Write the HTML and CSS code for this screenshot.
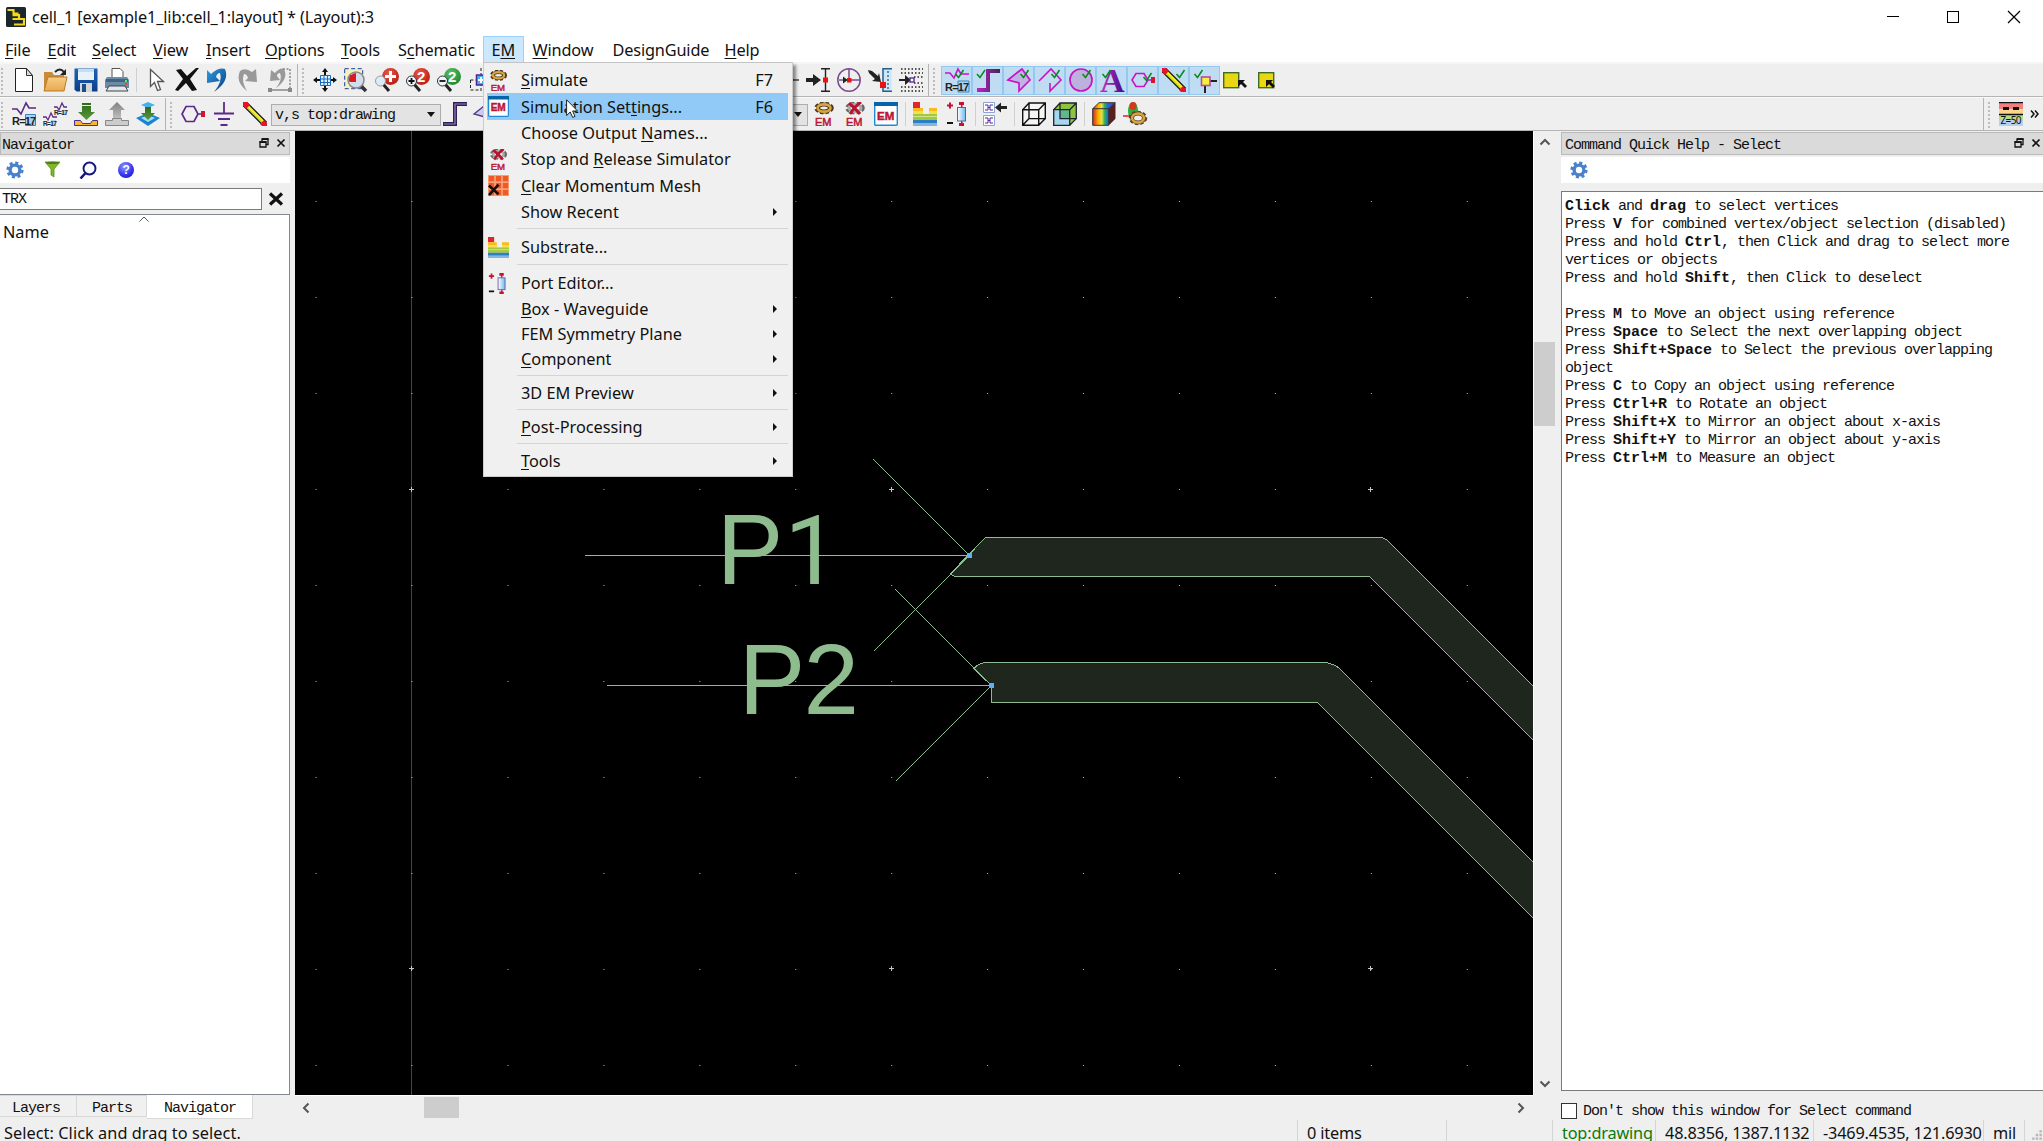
FILE: index.html
```html
<!DOCTYPE html>
<html lang="en">
<head>
<meta charset="utf-8">
<title>cell_1 [example1_lib:cell_1:layout] * (Layout):3</title>
<link rel="stylesheet" href="styles.css">
</head>
<body>
<svg class="defs" width="0" height="0">
  <defs>
    <linearGradient id="rainbow" x1="0" x2="1" y1="0" y2="0"><stop offset="0" stop-color="#e02020"/><stop offset=".25" stop-color="#f7b500"/><stop offset=".4" stop-color="#e8e04a"/><stop offset=".52" stop-color="#3cb44b"/><stop offset=".65" stop-color="#1e6fd9"/><stop offset="1" stop-color="#4338ca"/></linearGradient>
    <linearGradient id="purple" x1="0" x2="1" y1="0" y2="0"><stop offset="0" stop-color="#c31fc8"/><stop offset="1" stop-color="#3a2a55"/></linearGradient>
    <linearGradient id="letter" x1="0" x2="1" y1="0" y2="0"><stop offset="0" stop-color="#d030c0"/><stop offset="1" stop-color="#3a0b8a"/></linearGradient>
    <linearGradient id="blue" x1="0" x2="0" y1="0" y2="1"><stop offset="0" stop-color="#1d63b8"/><stop offset="1" stop-color="#0b3f86"/></linearGradient>
    <linearGradient id="tan" x1="0" x2="0" y1="0" y2="1"><stop offset="0" stop-color="#f7cd86"/><stop offset="1" stop-color="#e9a84f"/></linearGradient>
    <linearGradient id="grn" x1="0" x2="0" y1="0" y2="1"><stop offset="0" stop-color="#2d6a1b"/><stop offset="1" stop-color="#5b9a3c"/></linearGradient>
    <linearGradient id="gry" x1="0" x2="0" y1="0" y2="1"><stop offset="0" stop-color="#808080"/><stop offset="1" stop-color="#bdbdbd"/></linearGradient>
    <linearGradient id="arrowblue" x1="0" x2="1" y1="0" y2="1"><stop offset="0" stop-color="#2c9be0"/><stop offset="1" stop-color="#0b3c84"/></linearGradient>
    <radialGradient id="ball" cx=".4" cy=".3" r=".8"><stop offset="0" stop-color="#8f9bff"/><stop offset=".6" stop-color="#3a3af0"/><stop offset="1" stop-color="#1616c8"/></radialGradient>
    <radialGradient id="red" cx=".4" cy=".3" r=".8"><stop offset="0" stop-color="#e8574a"/><stop offset="1" stop-color="#b3160d"/></radialGradient>
    <radialGradient id="green" cx=".4" cy=".3" r=".8"><stop offset="0" stop-color="#5cc063"/><stop offset="1" stop-color="#17812a"/></radialGradient>
    <linearGradient id="cyl" x1="0" x2="1" y1="0" y2="0"><stop offset="0" stop-color="#fff"/><stop offset="1" stop-color="#6db9ee"/></linearGradient>
    <symbol id="check" viewBox="0 0 10 10"><path d="M1 5l3 3.500L9 1" fill="none" stroke="#078a1c" stroke-width="1.500"/></symbol>
    <symbol id="gear" viewBox="0 0 24 24"><circle cx="12" cy="12" r="9.500" fill="none" stroke="currentColor" stroke-width="4" stroke-dasharray="4 3.460"/><circle cx="12" cy="12" r="6.500" fill="none" stroke="currentColor" stroke-width="4.500"/></symbol>
    <symbol id="em-run" viewBox="0 0 24 24"><ellipse cx="12" cy="6" rx="8" ry="4.500" fill="none" stroke="#4b3a1a" stroke-width="3.600" stroke-dasharray="3.200 2"/><ellipse cx="12" cy="6" rx="6" ry="3.500" fill="none" stroke="#4b3a1a" stroke-width="4"/><ellipse cx="12" cy="6" rx="6.500" ry="3.600" fill="none" stroke="#d9a441" stroke-width="2.600"/><text x="3" y="23.500" class="em">EM</text></symbol>
    <symbol id="em-stop" viewBox="0 0 24 24"><ellipse cx="12" cy="6" rx="8" ry="4.500" fill="none" stroke="#666" stroke-width="3.600" stroke-dasharray="3.200 2"/><ellipse cx="12" cy="6" rx="6" ry="3.600" fill="none" stroke="#a9a9a9" stroke-width="3"/><path d="M6 1Q12 6 17 12M18 0Q12 4 7 12" stroke="#b8132d" stroke-width="3" fill="none"/><text x="3" y="23.500" class="em">EM</text></symbol>
    <symbol id="em-set" viewBox="0 0 24 24"><rect x=".7" y=".7" width="22.600" height="22.600" rx="1" fill="#fff" stroke="#1f8bd8" stroke-width="1.400"/><path d="M0 0h24v4H0z" fill="#0864a8"/><text x="3" y="17.500" class="em emb">EM</text></symbol>
    <symbol id="substrate" viewBox="0 0 24 24"><path d="M0 0h7v6H0z" fill="#e0262b"/><path d="M0 6h10v6h6V6h8v6H0z" fill="#fbb91e"/><path d="M0 9h10v3h6V9h8v6H0z" fill="#f6df4d"/><path d="M0 12h24v6H0z" fill="#a3c93c"/><path d="M0 14h24v1H0z" fill="#d3e58b"/><path d="M0 18h24v6H0z" fill="#2c7fc2"/><path d="M0 21h24v3H0z" fill="#86b6e0"/></symbol>
    <symbol id="port" viewBox="0 0 24 24"><path d="M1 3.500h6M4 .5v6" stroke="#c4122f" stroke-width="2"/><path d="M1 21h6" stroke="#111" stroke-width="2"/><path d="M13 0h5v3h-5zM13 21h5v3h-5zM15 3h1.500v18H15z" fill="#c4122f"/><rect x="11.500" y="5.500" width="8" height="13.500" fill="url(#cyl)" stroke="#6e57a8"/></symbol>
    <symbol id="pencil" viewBox="0 0 24 24"><path d="M2 2l20 20" stroke="#111" stroke-width="6"/><path d="M3 3l18 18" stroke="#f6ef28" stroke-width="3.500"/><path d="M3 4.500l16 16" stroke="#8abf2c" stroke-width="1"/><path d="M0 0h4l3 3-4 4-3-3zM24 24h-5l-2-2 4-4 3 3z" fill="#e5142a"/></symbol>
    <symbol id="resize" viewBox="0 0 10 10"><path d="M3 3V1h6v5.500H7M1 4h6v5H1z" fill="none" stroke="#111" stroke-width="1.300"/><path d="M.5 4.200h7M3 1.200h6.500" stroke="#111" stroke-width="1.800"/></symbol>
    <symbol id="close" viewBox="0 0 10 10"><path d="M1.500 1.500l7 7M8.500 1.500l-7 7" stroke="#111" stroke-width="1.700"/></symbol>
  </defs>
</svg>

<header class="titlebar">
  <svg class="logo" viewBox="0 0 20 20"><rect width="20" height="20" rx="1.500" fill="#1b262b"/><path d="M1.500 3h6v3.500h5M6.500 8.200h6.500v3M6.500 12H18v5.500H8" fill="none" stroke="#f3d71a" stroke-width="2.200"/></svg>
  <span class="ui title-text">cell_1 [example1_lib:cell_1:layout] * (Layout):3</span>
  <svg class="winctl" viewBox="0 0 134 14"><path d="M0 6.500h12" stroke="#000"/><rect x="60.500" y="1.500" width="11" height="11" fill="none" stroke="#000"/><path d="M121 1l12 12M133 1l-12 12" stroke="#000" stroke-width="1.200"/></svg>
</header>

<nav class="menubar ui">
  <span><u>F</u>ile</span><span><u>E</u>dit</span><span><u>S</u>elect</span><span><u>V</u>iew</span><span><u>I</u>nsert</span><span><u>O</u>ptions</span><span><u>T</u>ools</span><span>S<u>c</u>hematic</span><span class="open">E<u>M</u></span><span><u>W</u>indow</span><span>DesignGuide</span><span><u>H</u>elp</span>
</nav>

<div class="bar bar1">
  <div class="group g1">
    <svg viewBox="0 0 24 24"><path d="M3.500.500h11l6 7v16h-17z" fill="#fff" stroke="#222"/><path d="M14.500.500v7h6z" fill="#ddd" stroke="#333"/></svg>
    <svg viewBox="0 0 24 24"><path d="M1 23V4h8l2 3h10v16z" fill="#c98b3a"/><path d="M1 23L5 9h19l-3 14z" fill="url(#tan)" stroke="#b97a2c"/><path d="M12 4q5-5 9 0" fill="none" stroke="#222" stroke-width="2"/><path d="M23 1v6h-6z" fill="#222"/></svg>
    <svg viewBox="0 0 24 24"><path d="M.500.500h23v23h-21l-2-2z" fill="url(#blue)"/><path d="M4 1h16v11H4z" fill="#e8f2fa"/><path d="M4 1h16v3H4z" fill="#c5def0"/><path d="M6 15h12v9H6z" fill="#d5d5d8"/><path d="M8 16h4v8H8z" fill="#1d4b8d"/></svg>
    <svg viewBox="0 0 24 24"><path d="M7 10V.500h8l3 3V10" fill="#fff" stroke="#555"/><path d="M2 9h20l2 3v8H0v-8z" fill="#6a8ca6"/><path d="M1 11h22v3H1z" fill="#3f6380"/><path d="M4 18h16l3 5H1z" fill="#dce8f0" stroke="#444"/><path d="M20 12h2v2h-2z" fill="#4f5"/><path d="M20 15h2v2h-2z" fill="#e44"/></svg>
    <i class="sep"></i>
    <svg viewBox="0 0 24 24"><path d="M6.500 1.500v17l4-4 3 8 3-1-3-8h6z" fill="#fff" stroke="#555" stroke-width="1.300"/></svg>
    <svg viewBox="0 0 24 24"><path d="M1 2l5-1 6 7 9-8h3l-9 11 7 11-5 1-6-8-8 8-3-1 8-11z" fill="#111"/></svg>
    <svg viewBox="0 0 24 24"><path d="M1 2l4 4Q13-1 19 1q5 12-11 23 9-11 6-19-3 0-4 4l4 4-13 2z" fill="url(#arrowblue)"/></svg>
    <svg viewBox="0 0 24 24"><path d="M19 1l-4 3Q8-1 3 3q-5 11 7 20-6-10-3-17 3 0 4 4l-3 3 12 1z" fill="#999"/></svg>
    <svg viewBox="0 0 24 24"><path d="M3 2l4 3Q12-1 16 1q5 10-8 19 7-9 4-15-3 0-3 3l3 4-10 1z" fill="#999"/><path d="M15 1h7M22 1v20" stroke="#888" stroke-dasharray="2 1.500" fill="none" stroke-width="1.500"/><path d="M2 22h20" stroke="#888" stroke-width="1.500"/><path d="M0 20h4v4H0zM20 20h4v4h-4z" fill="#888"/></svg>
  </div>
  <div class="group g2">
    <svg viewBox="0 0 24 24"><path d="M12 0l3 4h-2v3h-2V4H9zM12 24l-3-4h2v-3h2v3h2zM0 12l4-3v2h3v2H4v2zM24 12l-4-3v2h-3v2h3v2z" fill="#111"/><path d="M7.500 7.500h10v10h-10zM11 7v11M14.500 7v11M7 11h11M7 14.500h11" fill="#dff0ff" stroke="#1769c0"/></svg>
    <svg viewBox="0 0 24 24"><rect x=".7" y=".7" width="18" height="20" fill="#f2f2bc" stroke="#223a99" stroke-dasharray="4 2.500"/><path d="M17 18l5 5" stroke="#333" stroke-width="3.500"/><circle cx="12" cy="12" r="8" fill="#d5dcec" stroke="#888" stroke-width="1.500"/><path d="M6 7h6v7H5.500q-1-4 .5-7z" fill="#dd1923"/><path d="M12 5v8H5a7.500 7.500 0 017-8z" fill="#dd1923"/></svg>
    <svg viewBox="0 0 24 24"><circle cx="15.500" cy="8.500" r="8.500" fill="url(#red)"/><path d="M10 8.500h11M15.500 3v11" stroke="#fff" stroke-width="3"/><path d="M8 16l6 7" stroke="#222" stroke-width="3"/><circle cx="5.500" cy="13" r="5" fill="#d8edf8" stroke="#999"/></svg>
    <svg viewBox="0 0 24 24"><circle cx="15.500" cy="8.500" r="8.500" fill="url(#red)"/><text x="11" y="14" class="num">2</text><path d="M8 16l6 7" stroke="#222" stroke-width="3"/><circle cx="5.500" cy="13" r="5" fill="#eef5fa" stroke="#333"/><path d="M2.500 13h6M5.500 10v6" stroke="#111" stroke-width="1.800"/></svg>
    <svg viewBox="0 0 24 24"><circle cx="15.500" cy="8.500" r="8.500" fill="url(#green)"/><text x="11" y="14" class="num">2</text><path d="M8 16l6 7" stroke="#222" stroke-width="3"/><circle cx="5.500" cy="13" r="5" fill="#eef5fa" stroke="#333"/><path d="M2.500 13h6" stroke="#111" stroke-width="1.800"/></svg>
    <svg viewBox="0 0 24 24"><path d="M2.500 12v10h10M2.500 12h6M13 0v24" fill="none" stroke="#222" stroke-dasharray="3 2"/><rect x="8.500" y="7" width="12" height="10" fill="#39b6ee" stroke="#52259b" stroke-width="1.500"/><path d="M10 12h9M13 9v6" stroke="#fff" stroke-width="2"/></svg>
    <i class="gap-a"></i>
    <svg viewBox="0 0 24 24"><path d="M0 12h24" stroke="#222" stroke-width="1.300"/></svg>
    <svg viewBox="0 0 24 24"><path d="M0 10h7V6l8 6-8 6v-4H0z" fill="#222"/><path d="M15 .700h9M15 23.300h9M19.500 1v22" stroke="#222" stroke-width="1.400"/><rect x="17" y="9.500" width="5" height="5" fill="#e11"/></svg>
    <svg viewBox="0 0 24 24"><circle cx="12" cy="12" r="11.200" fill="none" stroke="#7a4a92" stroke-width="1.500"/><path d="M12 1v11h11" fill="none" stroke="#7a4a92" stroke-width="1.500"/><path d="M2 12h7M6 9l4 3-4 3" fill="#222" stroke="#222"/><rect x="10" y="10" width="4.500" height="4.500" fill="#e11"/></svg>
    <svg viewBox="0 0 24 24"><path d="M0 2l4 1 6 5 1-3 2 9-9-1 3-2L1 5z" fill="#222"/><path d="M15 1h8.500v22H15z" fill="#c8e8fb"/><path d="M24 .700h-9v22.600h9" fill="none" stroke="#245c8c" stroke-width="1.500"/><path d="M20 3v18" stroke="#222" stroke-dasharray="2 2"/><path d="M12 14h6v6h-6z" fill="#e11"/></svg>
    <svg viewBox="0 0 24 24"><path d="M2 1h22M2 5h22M2 19h22M2 23h22M15 9h9M15 15h9" stroke="#222" stroke-width="1.500" stroke-dasharray="1.500 2"/><path d="M0 11h6V7l6 5-6 5v-4H0z" fill="#222"/><rect x="11" y="10" width="4" height="4" fill="#fff" stroke="#5a2a9a" stroke-width="1.400"/></svg>
  </div>
  <div class="group g3">
    <b class="on"><svg viewBox="0 0 24 24"><path d="M0 5h5l4 5 4-9 3 5h8" fill="none" stroke="#c715c5" stroke-width="1.600"/><use href="#check" x="9" y="1" width="11" height="10"/><path d="M13 13h11v11H13z" fill="#a9d4f5" stroke="#3c82b8"/><text x="0" y="22.500" class="rn">R=17</text></svg></b>
    <b class="on"><svg viewBox="0 0 24 24"><path d="M1 22h11V3h12" fill="none" stroke="url(#purple)" stroke-width="4"/><use href="#check" x="0" y="1" width="10" height="10"/></svg></b>
    <b class="on"><svg viewBox="0 0 24 24"><path d="M1 12L11 4l4-3 8 11-11 11v-8z" fill="#bfb3e6" stroke="#c715c5" stroke-width="1.700"/><use href="#check" x="12" y="1" width="11" height="10"/></svg></b>
    <b class="on"><svg viewBox="0 0 24 24"><path d="M1 13L13 1l10 11-11 11v-8" fill="none" stroke="#c715c5" stroke-width="1.600"/><use href="#check" x="12" y="1" width="11" height="10"/></svg></b>
    <b class="on"><svg viewBox="0 0 24 24"><circle cx="12" cy="12" r="11" fill="#bdb1dd" stroke="#c715c5" stroke-width="1.700"/><use href="#check" x="12" y="1" width="11" height="10"/></svg></b>
    <b class="on"><svg viewBox="0 0 24 24"><text x="0" y="24" class="biga">A</text><use href="#check" x="1" y="1" width="11" height="10"/></svg></b>
    <b class="on"><svg viewBox="0 0 24 24"><path d="M5 5.500h8l4 6.500-4 6.500H5L1 12zM17 12h4" fill="none" stroke="#c715c5" stroke-width="1.600"/><path d="M20 9h4v6h-4z" fill="#d4152c"/><use href="#check" x="11" y="4" width="11" height="10"/></svg></b>
    <b class="on"><svg viewBox="0 0 24 24"><use href="#pencil" width="24" height="24"/><use href="#check" x="13" y="1" width="11" height="10"/></svg></b>
    <b class="on"><svg viewBox="0 0 24 24"><path d="M17 13h7M12 18v7" stroke="#222" stroke-width="2"/><rect x="8.500" y="9" width="8.500" height="8.500" fill="#f5f13a" stroke="#b54aa8" stroke-width="1.600"/><use href="#check" x="0" y="1" width="11" height="10"/></svg></b>
    <svg class="after" viewBox="0 0 24 24"><rect x=".7" y="4.700" width="15" height="15" fill="#ead714" stroke="#3c6e28" stroke-width="1.400"/><path d="M15 12h7l-2 2 4 4-2 2-4-4-3 3z" fill="#111"/></svg>
    <svg class="after2" viewBox="0 0 24 24"><rect x="4.700" y="4.700" width="15" height="15" fill="#ead714" stroke="#3c6e28" stroke-width="1.400"/><path d="M12 12h7l-2 2 4 4-2 2-4-4-3 3z" fill="#111"/></svg>
  </div>
</div>

<div class="bar bar2">
  <div class="group g1">
    <svg viewBox="0 0 24 24"><path d="M0 7h5l4 5 5-11 3 5h7" fill="none" stroke="#5b2a86" stroke-width="1.600"/><path d="M13.500 12.500h10v11h-10z" fill="#a9d4f5" stroke="#3c82b8"/><text x="0" y="22.500" class="rn">R=17</text></svg>
    <svg viewBox="0 0 24 24"><path d="M11 5h3l2 3 3-7 2 4h3M0 15h3l2 3 3-7 2 4h4" fill="none" stroke="#5b2a86" stroke-width="1.300"/><path d="M19 8h5v5h-5zM8 18h5v6H8z" fill="#a9d4f5"/><text x="11" y="13" class="rs">R=17</text><text x="0" y="23.500" class="rs">R=17</text></svg>
    <svg viewBox="0 0 24 24"><path d="M8 1h9v2H8zM8 4h9v6h4l-8.500 8L4 10h4z" fill="url(#grn)"/><path d="M.500 18.500h6l2 3h8l2-3h5v5H.500z" fill="#f8b72c" stroke="#4b2f8e"/></svg>
    <svg viewBox="0 0 24 24"><path d="M12 0l8 8h-4v8H8V8H4z" fill="url(#gry)"/><path d="M.500 18.500h7v-2h9v2h7v5H.500z" fill="#ccc" stroke="#888"/></svg>
    <svg viewBox="0 0 24 24"><path d="M12 0l7 3-7 3-7-3z" fill="#43b1ec"/><path d="M0 16l12-5 12 5-12 8z" fill="#1684cf"/><path d="M5 16l7-3 7 3-7 4z" fill="#a5dcfa"/><path d="M9 5h6v6h4l-7 7-7-7h4z" fill="url(#grn)"/></svg>
  </div>
  <div class="group g2b">
    <svg viewBox="0 0 24 24"><path d="M5 4.500h8l4 7.500-4 7.500H5L1 12zM17 12h4" fill="none" stroke="#5b2a86" stroke-width="1.700"/><path d="M20 9h4v6h-4z" fill="#d4152c"/></svg>
    <svg viewBox="0 0 24 24"><path d="M12 0v11M2 11.500h20M6 17h12M8.500 23h7" stroke="#5b2a86" stroke-width="1.800" fill="none"/></svg>
    <svg viewBox="0 0 24 24"><use href="#pencil" width="24" height="24"/></svg>
    <div class="combo mono"><span>v,s top:drawing</span><i class="caret"></i></div>
    <svg viewBox="0 0 24 24"><path d="M0 22h12V2h12" fill="none" stroke="#2c2352" stroke-width="4"/><path d="M1 22h11V2h12" fill="none" stroke="#9a78b8" stroke-width="1.200"/></svg>
    <svg viewBox="0 0 24 24"><path d="M0 12L10 4l4-3 8 11-11 11v-8z" fill="#cfc8ef" stroke="#4d3b86" stroke-width="1.300"/></svg>
    <i class="gap-b"></i>
    <div class="combo small"><i class="caret"></i></div>
    <svg viewBox="0 0 24 24"><use href="#em-run" width="24" height="24"/></svg>
    <svg viewBox="0 0 24 24"><use href="#em-stop" width="24" height="24"/></svg>
    <svg viewBox="0 0 24 24"><use href="#em-set" width="24" height="24"/></svg>
    <i class="sep"></i>
    <svg viewBox="0 0 24 24"><use href="#substrate" width="24" height="24"/></svg>
    <svg viewBox="0 0 24 24"><use href="#port" x="2" width="24" height="24"/></svg>
    <i class="sep"></i>
    <svg viewBox="0 0 24 24"><path d="M.500.500h11v10H.500zM.500 13.500h11v10H.500z" fill="#fff" stroke="#8ba3d6"/><path d="M2 3h3v5H2M5 5.500h2M10 3H7v5h3M2 16h3v5H2M5 18.500h2M10 16H7v5h3" stroke="#5b2a9a" fill="none"/><path d="M12 5.500l6-5v3.500h6v3h-6v3.500z" fill="#222"/></svg>
    <i class="sep"></i>
    <svg viewBox="0 0 24 24"><path d="M.700 7.700h16v15.600h-16zM7 1h16.300v15.600H7zM.700 7.700L7 1M16.700 7.700L23.300 1M16.700 23.300l6.600-6.700M.700 23.300L7 16.600" fill="#fff" fill-opacity=".4" stroke="#111" stroke-width="1.400"/></svg>
    <svg viewBox="0 0 24 24"><path d="M.700 7.700L7 1h16.300v15.600l-6.600 6.700h-16z" fill="#8cc63e"/><path d="M.700 7.700h16v15.600h-16z" fill="#a4d8ee"/><path d="M7 7.700h9.700v9H7z" fill="#5fb78c"/><path d="M.700 7.700h16v15.600h-16zM7 1h16.300v15.600H7zM.700 7.700L7 1M16.700 7.700L23.300 1M16.700 23.300l6.600-6.700" fill="none" stroke="#223" stroke-width="1.300"/></svg>
    <i class="sep"></i>
    <svg viewBox="0 0 24 24"><path d="M.700 6.700L7 .700h16.300v16l-6.600 6.600h-16z" fill="url(#rainbow)"/><path d="M16.700 6.700l6.600-6v16l-6.600 6.600z" fill="#5a2020"/><path d="M.700 6.700L7 .700h16.300l-6.600 6zM16.700 6.700v16.600H.700V6.700" fill="none" stroke="#333"/></svg>
    <svg viewBox="0 0 24 24"><ellipse cx="10" cy="9" rx="5" ry="9" fill="#2fae3a"/><ellipse cx="10" cy="4" rx="3.500" ry="4" fill="#d33a1e"/><path d="M0 14h7" stroke="#d22" stroke-width="1.500"/><ellipse cx="15" cy="16" rx="7.500" ry="5.500" fill="none" stroke="#5a4720" stroke-width="3.500" stroke-dasharray="3 2"/><ellipse cx="15" cy="16" rx="6" ry="4.500" fill="#eee" stroke="#5a4720" stroke-width="4"/><ellipse cx="15" cy="16" rx="6" ry="4.500" fill="none" stroke="#d9a441" stroke-width="2.400"/></svg>
  </div>
  <div class="group g3b">
    <svg viewBox="0 0 24 24"><path d="M0 0h24v7H0z" fill="#f08080"/><path d="M0 7h24v6H0z" fill="#fbd58a"/><path d="M0 13h24v5H0z" fill="#b9dc85"/><path d="M0 18h24v6H0z" fill="#b5cfee"/><path d="M0 .700h24M0 12.500h24" stroke="#111" stroke-width="1.300"/><path d="M4 5h6v3H4zM14 5h6v3h-6z" fill="#111"/><text x="1.500" y="22" class="z">Z=50</text></svg>
    <svg class="more" viewBox="0 0 9 8"><path d="M1 .500L4 4 1 7.500M5 .500L8 4 5 7.500" fill="none" stroke="#111" stroke-width="1.500"/></svg>
  </div>
</div>

<main class="work">
  <section class="dock left">
    <div class="dock-title mono"><span>Navigator</span><svg viewBox="0 0 10 10"><use href="#resize"/></svg><svg viewBox="0 0 10 10"><use href="#close"/></svg></div>
    <div class="dock-tools">
      <svg class="gearicon" viewBox="0 0 24 24"><use href="#gear"/></svg>
      <svg viewBox="0 0 18 18"><path d="M2 1h15l-6 7v8l-3-2V8z" fill="#7fb62c" stroke="#5c8f1a" stroke-width=".8"/><ellipse cx="9.500" cy="1.800" rx="7" ry="1.300" fill="#4d7d16"/></svg>
      <svg viewBox="0 0 18 18"><circle cx="10.500" cy="7.500" r="6" fill="#f8f8ff" stroke="#15157f" stroke-width="1.900"/><path d="M6.500 12L1.500 17.500" stroke="#15157f" stroke-width="2.600"/></svg>
      <svg viewBox="0 0 18 18"><circle cx="10" cy="9" r="8" fill="url(#ball)"/><text x="6.400" y="13.200" class="q">?</text></svg>
    </div>
    <div class="filter"><div class="field mono">TRX</div><svg viewBox="0 0 16 16"><path d="M2 2.500l12 11M14 2.500l-12 11" stroke="#111" stroke-width="3.200"/></svg></div>
    <div class="list ui"><svg viewBox="0 0 10 6"><path d="M.500 5.500l4.500-4.500 4.500 4.500" fill="none" stroke="#555"/></svg><span>Name</span></div>
    <div class="tabs mono"><span>Layers</span><span>Parts</span><span class="active">Navigator</span></div>
  </section>

  <section class="viewport">
    <svg class="layout" viewBox="295 131 1238 964">
      <defs>
        <pattern id="dots" x="315.600" y="201" width="95.930" height="96" patternUnits="userSpaceOnUse"><rect width="1" height="1" fill="#b4b9b4"/></pattern>
      </defs>
      <rect x="295" y="131" width="1238" height="964" fill="#000"/>
      <g shape-rendering="crispEdges" fill="none" stroke="#8fbc8f">
        <path d="M411.500 131v964" stroke="#354a4d"/>
        <rect x="295" y="131" width="1238" height="964" fill="url(#dots)" stroke="none"/>
        <path d="M409 489.500h5M411.500 487v5M889 489.500h5M891.500 487v5M1368 489.500h5M1370.500 487v5M409 968.500h5M411.500 966v5M889 968.500h5M891.500 966v5M1368 968.500h5M1370.500 966v5" stroke="#c4c8c4"/>
        <path d="M985.500 537.500H1382.500l5 3 150 150v54L1369.500 576.500H955l-5-2.500z" fill="#1e261e"/>
        <path d="M984 662.500h342l7 2 5.500 3 200 200v56L1317.500 702.500h-326v-17l-18-17 5-4z" fill="#1e261e"/>
        <path d="M585 555.500h384M873.500 459.500l96 96-96 96M607 685.500h384M895.500 589.500l96 96-96 96"/>
        <path d="M967 553h5v5h-5zM989 683h5v5h-5z" fill="#5ab0ff" stroke="none"/>
      </g>
      <g class="pins"><text x="716.800" y="584">P</text><text x="784.500" y="584" class="one">1</text><text x="738.800" y="714">P</text><text x="803.500" y="714">2</text></g>
    </svg>
    <div class="vscroll"><svg viewBox="0 0 12 8"><path d="M1.500 6.500L6 2l4.500 4.500" /></svg><i class="thumb"></i><svg class="end" viewBox="0 0 12 8"><path d="M1.500 1.500L6 6l4.500-4.500"/></svg></div>
    <div class="hscroll"><svg viewBox="0 0 8 12"><path d="M6.500 1.500L2 6l4.500 4.500"/></svg><i class="thumb"></i><svg class="end" viewBox="0 0 8 12"><path d="M1.500 1.500L6 6l-4.500 4.500"/></svg></div>
  </section>

  <section class="dock right">
    <div class="dock-title mono"><span>Command Quick Help - Select</span><svg viewBox="0 0 10 10"><use href="#resize"/></svg><svg viewBox="0 0 10 10"><use href="#close"/></svg></div>
    <div class="dock-tools"><svg class="gearicon" viewBox="0 0 24 24"><use href="#gear"/></svg></div>
    <div class="help mono"><b>Click</b> and <b>drag</b> to select vertices<br>Press <b>V</b> for combined vertex/object selection (disabled)<br>Press and hold <b>Ctrl</b>, then Click and drag to select more<br>vertices or objects<br>Press and hold <b>Shift</b>, then Click to deselect<br><br>Press <b>M</b> to Move an object using reference<br>Press <b>Space</b> to Select the next overlapping object<br>Press <b>Shift+Space</b> to Select the previous overlapping<br>object<br>Press <b>C</b> to Copy an object using reference<br>Press <b>Ctrl+R</b> to Rotate an object<br>Press <b>Shift+X</b> to Mirror an object about x-axis<br>Press <b>Shift+Y</b> to Mirror an object about y-axis<br>Press <b>Ctrl+M</b> to Measure an object</div>
    <label class="hide mono"><i class="box"></i><span>Don't show this window for Select command</span></label>
  </section>
</main>

<footer class="status ui">
  <span class="hint">Select: Click and drag to select.</span><span>0 items</span><span></span><span class="layer">top:drawing</span><span>48.8356, 1387.1132</span><span>-3469.4535, 121.6930</span><span>mil</span>
  <svg viewBox="0 0 10 10"><path d="M7 1h2v2H7zM4 4h2v2H4zM7 4h2v2H7zM1 7h2v2H1zM4 7h2v2H4zM7 7h2v2H7z" fill="#b5b5b5"/></svg>
</footer>

<div class="menu ui">
  <div class="item"><svg viewBox="0 0 24 24"><use href="#em-run"/></svg><span><u>S</u>imulate</span><kbd>F7</kbd></div>
  <div class="item tall hot"><svg viewBox="0 0 24 24"><use href="#em-set"/></svg><span>Simulation Set<u>t</u>ings...</span><kbd>F6</kbd></div>
  <div class="item"><i></i><span>Choose Output <u>N</u>ames...</span></div>
  <div class="item"><svg viewBox="0 0 24 24"><use href="#em-stop"/></svg><span>Stop and <u>R</u>elease Simulator</span></div>
  <div class="item tall"><svg viewBox="0 0 24 24"><path d="M0 0h24v24H0z" fill="#f7a079"/><path d="M1 1h6v6H1zM9 1h6v6H9zM17 1h6v6h-6zM1 9h6v6H1zM9 9h6v6H9zM17 9h6v6h-6zM9 17h6v6H9zM17 17h6v6h-6zM1 17h6v6H1z" fill="#ef5a24"/><path d="M1 12l11 10M12 11L1 23" stroke="#111" stroke-width="3"/></svg><span><u>C</u>lear Momentum Mesh</span></div>
  <div class="item sub"><i></i><span>Show Recent</span></div>
  <hr class="first">
  <div class="item"><svg viewBox="0 0 24 24"><use href="#substrate"/></svg><span>Substrate...</span></div>
  <hr class="second">
  <div class="item"><svg viewBox="0 0 24 24"><use href="#port"/></svg><span>Port Editor...</span></div>
  <div class="item short sub"><i></i><span><u>B</u>ox - Waveguide</span></div>
  <div class="item short sub"><i></i><span>FEM Symmetry Plane</span></div>
  <div class="item short sub"><i></i><span><u>C</u>omponent</span></div>
  <hr>
  <div class="item sub"><i></i><span>3D EM Preview</span></div>
  <hr>
  <div class="item sub"><i></i><span><u>P</u>ost-Processing</span></div>
  <hr>
  <div class="item sub"><i></i><span><u>T</u>ools</span></div>
</div>
<svg class="pointer" viewBox="0 0 12 19"><path d="M.600.800v15.700l3.600-3.500 2.500 5.400 2.300-1-2.400-5.400h5z" fill="#fff" stroke="#222" stroke-width="1"/></svg>
</body>
</html>
```
FILE: styles.css
```css
* { box-sizing: border-box; }
body { margin: 0; width: 2043px; height: 1141px; overflow: hidden; background: #efefef; color: #111; display: flex; flex-direction: column; position: relative; }
svg { display: block; flex: none; }
.defs { position: absolute; }
.ui { font-family: "Noto Sans", "Open Sans", sans-serif; font-size: 16.3px; letter-spacing: -0.15px; white-space: nowrap; }
.mono { font-family: "Liberation Mono", monospace; font-size: 15px; letter-spacing: -1px; white-space: nowrap; }
.mono b { letter-spacing: 0; }
u { text-decoration-thickness: 1px; text-underline-offset: 2px; }

.titlebar { height: 35px; flex: none; background: #fff; display: flex; align-items: center; padding: 0 22px 0 6px; }
.logo { width: 20px; height: 20px; margin-right: 6px; margin-top: -2px; }
.title-text { margin-top: -1px; letter-spacing: -0.12px; }
.winctl { width: 134px; height: 14px; margin-left: auto; margin-top: -1px; }

.menubar { height: 27px; flex: none; background: #fff; display: grid; grid-template-columns: 42.5px 44.5px 61px 53px 59px 76px 57px 84.5px 50px 80px 112px 60px; padding-left: 5px; line-height: 30px; }
.menubar .open { margin: 1px 9px 0 0; padding-left: 8px; border: 1px solid #99d1ff; background: #cce8ff; line-height: 27px; }

.bar { display: grid; flex: none; background: #efefef; border-bottom: 1px solid #b4b4b4; }
.bar1 { height: 35px; grid-template-columns: 298px 631px 1fr; border-top: 2px solid #f6f6f6; }
.bar2 { height: 34px; grid-template-columns: 166px 1818px 1fr; border-top: 1px solid #fafafa; }
.group { display: flex; align-items: center; gap: 7px; border-right: 1px solid #b4b4b4; background: repeating-linear-gradient(#bdbdbd 0 2px, #efefef 2px 4px) 1px 4px / 2px 26px no-repeat; }
.group:last-child { border-right: 0; }
.group + .group { background-position: 4px 4px; }
.group > svg, .on > svg { width: 24px; height: 24px; overflow: visible; }
.g1 { padding-left: 12px; }
.g2 { padding-left: 15px; }
.g2b { padding-left: 15px; }
.g3 { padding-left: 12px; gap: 0; }
.g3b { padding-left: 15px; }
.gap-a { width: 269px; flex: none; }
.gap-b { width: 269px; flex: none; }
.sep { width: 1px; height: 24px; background: #cfcfcf; flex: none; }
.on { width: 31px; height: 29px; border: 1px solid #93c8f1; background: #bfdcf2; display: flex; align-items: center; justify-content: center; flex: none; }
.group .after { margin-left: 3px; }
.group .after2 { margin-left: 7px; }
.group > .more { width: 9px; height: 8px; }
.combo { height: 22px; width: 170px; flex: none; margin-left: -3px; margin-right: -5px; border: 1px solid #adadad; background: #e3e3e3; display: flex; align-items: center; justify-content: space-between; padding: 0 5px 0 3px; margin-top: 1px; }
.combo span { padding-top: 2px; }
.combo.small { width: 30px; justify-content: flex-end; margin-right: -3px; }
.caret { width: 0; height: 0; border: 4px solid transparent; border-top: 5px solid #111; border-bottom: 0; }
.em { font: 11px "Liberation Sans", sans-serif; fill: #bb1733; stroke: #bb1733; stroke-width: .5px; letter-spacing: 0; }
.emb { font-weight: bold; font-size: 11.500px; }
.num { font: bold 15px "Liberation Sans", sans-serif; fill: #fff; }
.rn { font: bold 11px "Liberation Sans", sans-serif; letter-spacing: -.8px; fill: #222; }
.rs { font: bold 6.500px "Liberation Sans", sans-serif; letter-spacing: -.6px; fill: #222; }
.z { font: 10px "Noto Sans", sans-serif; letter-spacing: -.6px; fill: #111; }
.q { font: bold 12px "Liberation Sans", sans-serif; fill: #fff; }
.biga { font: bold 34px "Liberation Serif", serif; fill: url(#letter); }

.work { height: 989px; flex: none; display: grid; grid-template-columns: 290px 1261px 482px; column-gap: 5px; }
.dock { display: flex; flex-direction: column; padding-top: 1px; min-width: 0; }
.dock-title { height: 23px; flex: none; display: flex; align-items: center; border: 1px solid #b9b9b9; background: #dadada; padding: 4px 3px 0 1px; }
.dock-title span { margin-right: auto; }
.dock-title svg { width: 10px; height: 10px; margin: -5px 0 0 7px; }
.dock-tools { height: 26px; margin-top: 2px; flex: none; background: #fff; display: flex; align-items: center; padding-left: 6px; gap: 19px; }
.dock-tools svg { width: 18px; height: 18px; }
.dock-tools .gearicon { color: #4a80cc; }
.dock-tools svg:nth-child(3) { margin-left: -1px; }
.filter { display: flex; align-items: center; gap: 6px; margin-top: 4px; height: 23px; flex: none; }
.filter svg { width: 16px; height: 16px; }
.field { width: 262px; height: 22px; border: 1px solid #7a7a7a; border-left: 0; background: #fff; line-height: 22px; padding-left: 2px; }
.list { margin-top: 4px; height: 881px; flex: none; border: 1px solid #828790; border-left: 0; background: #fff; padding: 1px 0 0 3px; }
.list svg { width: 10px; height: 6px; margin-left: 136px; }
.list span { display: block; line-height: 20px; letter-spacing: 0; }
.tabs { display: flex; height: 25px; flex: none; align-items: flex-start; }
.tabs span { height: 22px; border: 1px solid #d9d9d9; border-left: 0; line-height: 25px; background: #f0f0f0; }
.tabs span:nth-child(1) { width: 77px; padding-left: 12px; }
.tabs span:nth-child(2) { width: 70px; padding-left: 15px; }
.tabs .active { width: 106px; height: 24px; padding-left: 17px; background: #fff; border-top: 0; line-height: 27px; }

.viewport { display: grid; grid-template-columns: 1238px 23px; grid-template-rows: 964px 25px; }
.layout { width: 1238px; height: 964px; }
.pins { font-family: "Liberation Sans", sans-serif; font-size: 99.800px; fill: #8fbc8f; }
.pins .one { font-family: Roboto, sans-serif; font-size: 96.600px; }
.vscroll, .hscroll { display: flex; align-items: center; background: #efefef; }
.vscroll { flex-direction: column; padding: 7px 1px 7px 0; border-left: 1px solid #fff; }
.vscroll svg { width: 12px; height: 8px; }
.hscroll svg { width: 8px; height: 12px; }
.hscroll { border-top: 1px solid #fff; padding: 0 8px 1px 7px; }
.vscroll path, .hscroll path { fill: none; stroke: #555; stroke-width: 2; }
.thumb { background: #cdcdcd; }
.vscroll .thumb { width: 21px; height: 84px; margin-top: 196px; }
.hscroll .thumb { width: 35px; height: 21px; margin-left: 114px; }
.vscroll .end { margin-top: auto; }
.hscroll .end { margin-left: auto; }

.right .dock-title { padding-left: 3px; padding-right: 2px; border-right: 0; }
.right .dock-tools { padding-left: 9px; }
.help { margin-top: 8px; height: 900px; flex: none; border: 1px solid #7a7a7a; border-right: 0; background: #fff; padding: 6px 0 0 3px; line-height: 18px; }
.hide { display: flex; align-items: center; gap: 6px; margin-top: 10px; }
.hide span { padding-top: 2px; }
.box { width: 16px; height: 16px; border: 1px solid #333; background: #fff; flex: none; }

.status { height: 21px; flex: none; display: grid; grid-template-columns: 1298px 149px 106px 103px 158px 170px 41px 18px; overflow: hidden; line-height: 26px; }
.status span { padding-left: 9px; border-right: 1px solid #d5d5d5; letter-spacing: -0.18px; }
.status .hint { padding-left: 4px; letter-spacing: 0.06px; }
.status .layer { color: #0a7a0a; }
.status svg { width: 12px; height: 12px; margin: 9px 0 0 6px; }

.menu { position: absolute; left: 483px; top: 62px; width: 310px; height: 415px; border: 1px solid #ccc; border-top-color: #c4c4c4; background: #f0f0f0; padding: 4px 4px 0 3px; box-shadow: 3px 3px 3px rgba(0,0,0,.45); letter-spacing: 0; }
.item { height: 26px; display: flex; align-items: center; position: relative; }
.item.tall { height: 27px; }
.item.short { height: 25.300px; }
.item > svg, .item > i { width: 21px; height: 21px; margin: 0 12px 0 1px; flex: none; }
.hot { background: #91c9f7; }
.item kbd { font: inherit; margin-left: auto; margin-right: 15px; }
.sub::after { content: ""; margin-left: auto; margin-right: 11px; border: 4px solid transparent; border-left: 4px solid #111; border-right: 0; }
.menu hr { border: 0; height: 1px; background: #d4d4d4; margin: 3px 0 4px 30px; }
.menu .first { margin-bottom: 5px; }
.menu .second { margin: 4px 0 5px 30px; }
.pointer { position: absolute; left: 566px; top: 99px; width: 12px; height: 19px; }
```
